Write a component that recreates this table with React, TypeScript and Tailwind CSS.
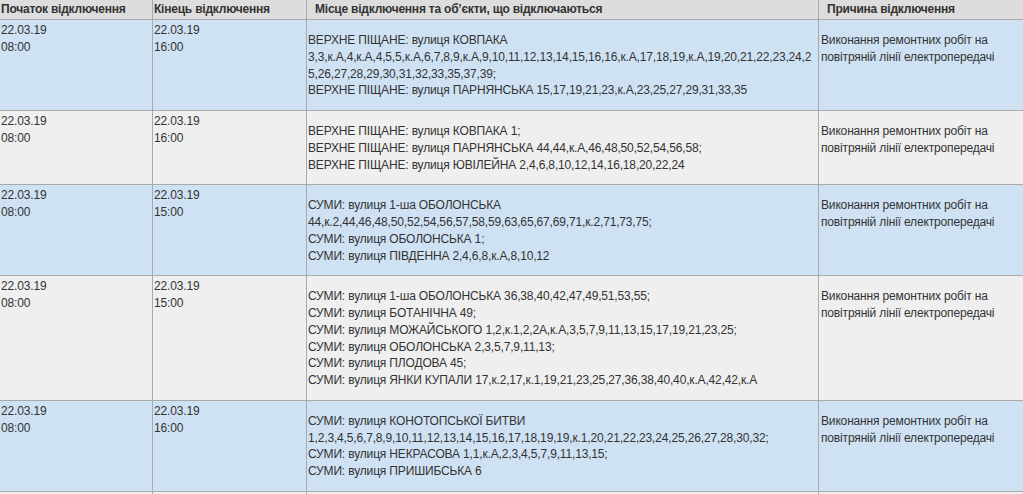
type Outage = {
  start: string[];
  end: string[];
  places: string[];
};

const reason = ["Виконання ремонтних робіт на", "повітряній лінії електропередачі"];

const outages: Outage[] = [
  {
    start: ["22.03.19", "08:00"],
    end: ["22.03.19", "16:00"],
    places: [
      "ВЕРХНЕ ПІЩАНЕ: вулиця КОВПАКА",
      "3,3,к.А,4,к.А,4,5,5,к.А,6,7,8,9,к.А,9,10,11,12,13,14,15,16,16,к.А,17,18,19,к.А,19,20,21,22,23,24,2",
      "5,26,27,28,29,30,31,32,33,35,37,39;",
      "ВЕРХНЕ ПІЩАНЕ: вулиця ПАРНЯНСЬКА 15,17,19,21,23,к.А,23,25,27,29,31,33,35",
    ],
  },
  {
    start: ["22.03.19", "08:00"],
    end: ["22.03.19", "16:00"],
    places: [
      "ВЕРХНЕ ПІЩАНЕ: вулиця КОВПАКА 1;",
      "ВЕРХНЕ ПІЩАНЕ: вулиця ПАРНЯНСЬКА 44,44,к.А,46,48,50,52,54,56,58;",
      "ВЕРХНЕ ПІЩАНЕ: вулиця ЮВІЛЕЙНА 2,4,6,8,10,12,14,16,18,20,22,24",
    ],
  },
  {
    start: ["22.03.19", "08:00"],
    end: ["22.03.19", "15:00"],
    places: [
      "СУМИ: вулиця 1-ша ОБОЛОНСЬКА",
      "44,к.2,44,46,48,50,52,54,56,57,58,59,63,65,67,69,71,к.2,71,73,75;",
      "СУМИ: вулиця ОБОЛОНСЬКА 1;",
      "СУМИ: вулиця ПІВДЕННА 2,4,6,8,к.А,8,10,12",
    ],
  },
  {
    start: ["22.03.19", "08:00"],
    end: ["22.03.19", "15:00"],
    places: [
      "СУМИ: вулиця 1-ша ОБОЛОНСЬКА 36,38,40,42,47,49,51,53,55;",
      "СУМИ: вулиця БОТАНІЧНА 49;",
      "СУМИ: вулиця МОЖАЙСЬКОГО 1,2,к.1,2,2А,к.А,3,5,7,9,11,13,15,17,19,21,23,25;",
      "СУМИ: вулиця ОБОЛОНСЬКА 2,3,5,7,9,11,13;",
      "СУМИ: вулиця ПЛОДОВА 45;",
      "СУМИ: вулиця ЯНКИ КУПАЛИ 17,к.2,17,к.1,19,21,23,25,27,36,38,40,40,к.А,42,42,к.А",
    ],
  },
  {
    start: ["22.03.19", "08:00"],
    end: ["22.03.19", "16:00"],
    places: [
      "СУМИ: вулиця КОНОТОПСЬКОЇ БИТВИ",
      "1,2,3,4,5,6,7,8,9,10,11,12,13,14,15,16,17,18,19,19,к.1,20,21,22,23,24,25,26,27,28,30,32;",
      "СУМИ: вулиця НЕКРАСОВА 1,1,к.А,2,3,4,5,7,9,11,13,15;",
      "СУМИ: вулиця ПРИШИБСЬКА 6",
    ],
  },
];

const Lines = ({ lines }: { lines: string[] }) => (
  <>
    {lines.map((l, i) => (
      <div key={i} className="whitespace-nowrap">
        {l}
      </div>
    ))}
  </>
);

export default function App() {
  return (
    <div
      className="h-[494px] w-[1023px] overflow-hidden bg-white text-[12px] leading-[16.75px] tracking-[-0.16px] text-[#333]"
      style={{ fontFamily: '"Liberation Sans", Arial, sans-serif' }}
    >
      <div className="grid grid-cols-[153px_154px_512px_1fr]">
        {/* header */}
        <div className="h-5 border-r border-b border-[#a9a9a9] bg-[#dddddd] pl-px font-bold leading-[19px] tracking-[-0.22px]">
          Початок відключення
        </div>
        <div className="h-5 border-r border-b border-[#a9a9a9] bg-[#dddddd] pl-px font-bold leading-[19px] tracking-[-0.22px]">
          Кінець відключення
        </div>
        <div className="h-5 border-r border-b border-[#a9a9a9] bg-[#dddddd] pl-2 font-bold leading-[19px] tracking-[-0.22px]">
          Місце відключення та об’єкти, що відключаються
        </div>
        <div className="h-5 border-b border-[#a9a9a9] bg-[#dddddd] pl-2 font-bold leading-[19px] tracking-[-0.22px]">
          Причина відключення
        </div>

        {outages.map((row, idx) => {
          const bg = idx % 2 === 0 ? "bg-[#cfe2f3]" : "bg-[#efefef]";
          return (
            <div key={idx} className="contents">
              <div className={`border-r border-b border-[#a9a9a9] px-px pt-0.5 ${bg}`}>
                <Lines lines={row.start} />
              </div>
              <div className={`border-r border-b border-[#a9a9a9] px-px pt-0.5 ${bg}`}>
                <Lines lines={row.end} />
              </div>
              <div className={`border-r border-b border-[#a9a9a9] pl-px pt-3 pb-[11px] ${bg}`}>
                <Lines lines={row.places} />
              </div>
              <div className={`border-b border-[#a9a9a9] pl-0.5 pt-3 ${bg}`}>
                <Lines lines={reason} />
              </div>
            </div>
          );
        })}

        {/* next row, only its top edge is in view */}
        <div className="h-10 border-r border-[#a9a9a9] bg-[#efefef]" />
        <div className="h-10 border-r border-[#a9a9a9] bg-[#efefef]" />
        <div className="h-10 border-r border-[#a9a9a9] bg-[#efefef]" />
        <div className="h-10 bg-[#efefef]" />
      </div>
    </div>
  );
}
